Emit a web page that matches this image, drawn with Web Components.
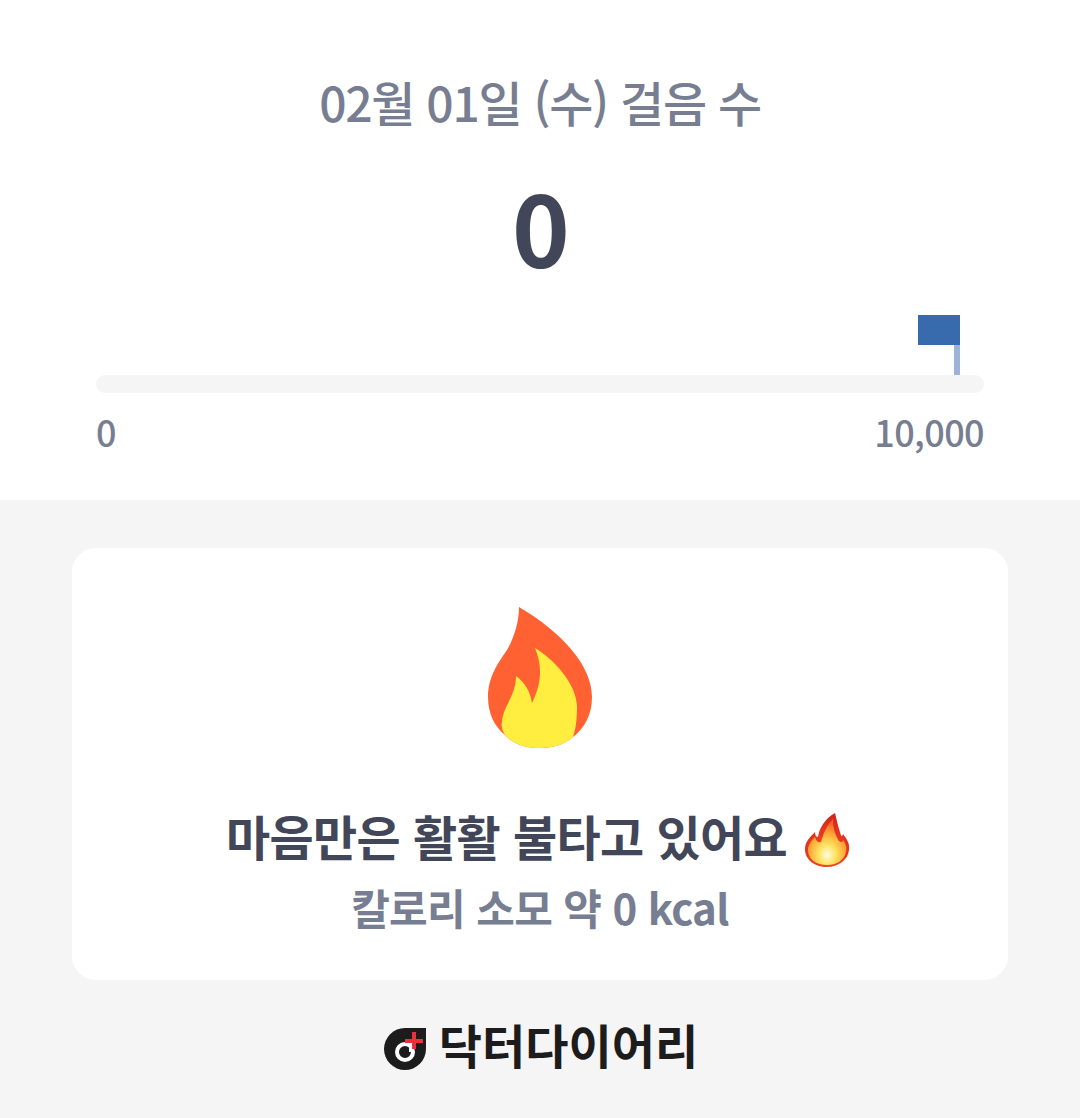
<!DOCTYPE html>
<html lang="ko">
<head>
<meta charset="utf-8">
<title>걸음 수</title>
<style>
  html, body { margin: 0; padding: 0; background: #f5f5f5; }
  body { font-family: "Noto Sans CJK KR", "Noto Sans", sans-serif; }
</style>
</head>
<body>
<step-page>
  <step-summary title-text="02월 01일 (수) 걸음 수" count="0" goal="10,000"></step-summary>
  <calorie-card message="마음만은 활활 불타고 있어요" calories="칼로리 소모 약 0 kcal"></calorie-card>
  <brand-logo></brand-logo>
</step-page>

<script>
// Page shell, the grey background below the summary.
customElements.define('step-page',
  class extends HTMLElement {
    constructor() {
      super()
      this.attachShadow({ mode: 'open' }).innerHTML = `
        <style>
          :host { display: flex; flex-direction: column; width: 1080px; height: 1118px; background: #f5f5f5; }
        </style>
        <slot></slot>
      `
    }
  }
)

// White block with date, count and progress bar.
customElements.define('step-summary',
  class extends HTMLElement {
    constructor() {
      super()
      this.attachShadow({ mode: 'open' }).innerHTML = `
        <style>
          :host { display: block; height: 500px; box-sizing: border-box; padding-top: 66px; background: #fff; text-align: center; }
          h1 { margin: 0; font-size: 48px; line-height: 70px; font-weight: 500; letter-spacing: -1.3px; color: #777e91; }
          .count { margin-top: 43px; padding-left: 2px; font-size: 98px; line-height: 92px; font-weight: 700; color: #414658; }
          .track-area { margin: 0 96px; }
          .flag { display: flex; flex-direction: column; align-items: flex-end; margin: 44px 24px 0 0; }
          .cloth { width: 42px; height: 30px; background: #386aae; }
          .pole { width: 6px; height: 30px; background: #9bb4d7; }
          .track { height: 18px; border-radius: 9px; background: #f5f5f5; }
          .labels { display: flex; justify-content: space-between; margin-top: 14px; font-size: 36px; line-height: 48px; font-weight: 500; letter-spacing: -0.6px; color: #777e91; }
        </style>
        <h1></h1>
        <div class="count"></div>
        <div class="track-area">
          <div class="flag"><div class="cloth"></div><div class="pole"></div></div>
          <div class="track"></div>
          <div class="labels"><span>0</span><span class="goal"></span></div>
        </div>
      `
    }

    connectedCallback() {
      this.shadowRoot.querySelector('h1').textContent = this.getAttribute('title-text')
      this.shadowRoot.querySelector('.count').textContent = this.getAttribute('count')
      this.shadowRoot.querySelector('.goal').textContent = this.getAttribute('goal')
    }
  }
)

// Rounded card with the flame and the message.
customElements.define('calorie-card',
  class extends HTMLElement {
    constructor() {
      super()
      this.attachShadow({ mode: 'open' }).innerHTML = `
        <style>
          :host { display: flex; flex-direction: column; align-items: center; box-sizing: border-box; height: 432px; margin: 48px 72px 0; padding-top: 58px; background: #fff; border-radius: 24px; text-align: center; }
          .big { display: block; width: 108px; height: 144px; }
          .msg { display: flex; align-items: center; justify-content: center; gap: 15px; margin-top: 50px; padding-right: 2px; font-size: 48px; line-height: 70px; font-weight: 700; letter-spacing: -0.6px; color: #414658; }
          .small { width: 50px; height: 56px; margin-top: 10px; }
          .cal { margin-top: 7px; font-size: 42px; line-height: 60px; font-weight: 700; letter-spacing: -0.65px; color: #777e91; }
        </style>
        <svg class="big" viewBox="0 0 108 144">
          <path fill="#ff6133" d="M33 1C33 16 28 32 21 44C13 56 2 70 2 91C2 108 9 121 19 129C28 139 41 142 54 142C68 142 79 138 87 131C99 122 106 108 106 91C106 60 77 27 33 1Z"/>
          <path fill="#ffee40" d="M49 42C66 52 90 76 91 100C91 113 90 122 87 131C79 138 68 142 54 142C41 142 28 139 19 129C16 124 15 120 16 116C17 100 30 90 30 70C38 76 44 84 46 97C52 84 59 66 49 42Z"/>
        </svg>
        <div class="msg">
          <span class="text"></span>
          <svg class="small" viewBox="0 0 50 56">
            <defs>
              <radialGradient id="fire" cx="0.5" cy="0.78" r="0.72">
                <stop offset="0" stop-color="#ef5a22"/>
                <stop offset="0.7" stop-color="#e5321e"/>
                <stop offset="1" stop-color="#d1281c"/>
              </radialGradient>
              <radialGradient id="core" cx="0.5" cy="0.78" r="0.7">
                <stop offset="0" stop-color="#fffbe0"/>
                <stop offset="0.3" stop-color="#ffe566"/>
                <stop offset="0.62" stop-color="#fdb23a"/>
                <stop offset="1" stop-color="#f0602a"/>
              </radialGradient>
            </defs>
            <path fill="url(#fire)" d="M33 1C35 9 36 14 38 20C39 24 40 26 41 22C45 27 48 32 47 38C46 48 36 55 25 55C13 55 3 48 3 37C3 30 8 25 13 20C13 23 14 25 16 25C17 17 23 6 33 1Z"/>
            <path fill="url(#core)" d="M31 7C31 16 33 23 37 29C39 31 41 30 41 28C44 32 45 36 44 40C42 49 34 53 25 53C15 53 6 48 6 38C6 33 9 29 13 25C14 29 16 31 19 30C21 22 25 13 31 7Z"/>
          </svg>
        </div>
        <div class="cal"></div>
      `
    }

    connectedCallback() {
      this.shadowRoot.querySelector('.text').textContent = this.getAttribute('message')
      this.shadowRoot.querySelector('.cal').textContent = this.getAttribute('calories')
    }
  }
)

// Logo at the foot of the page.
customElements.define('brand-logo',
  class extends HTMLElement {
    constructor() {
      super()
      this.attachShadow({ mode: 'open' }).innerHTML = `
        <style>
          :host { display: flex; align-items: flex-start; justify-content: center; gap: 13px; margin-top: 38px; padding-left: 2px; height: 56px; }
          svg { width: 42px; height: 42px; margin-top: 10px; }
          span { margin-top: -2px; font-size: 47px; line-height: 56px; font-weight: 700; letter-spacing: 0; color: #1c1c1c; }
        </style>
        <svg viewBox="0 0 42 42">
          <path fill="#1c1c1c" d="M21 0H42V21A21 21 0 1 1 21 0Z"/>
          <circle cx="21" cy="24" r="8" fill="none" stroke="#fff" stroke-width="4"/>
          <path fill="none" stroke="#fff" stroke-width="4" d="M27 14V24"/>
          <path fill="none" stroke="#e8333c" stroke-width="4" d="M30 4V21M21 13H39"/>
        </svg>
        <span>닥터다이어리</span>
      `
    }
  }
)
</script>
</body>
</html>
